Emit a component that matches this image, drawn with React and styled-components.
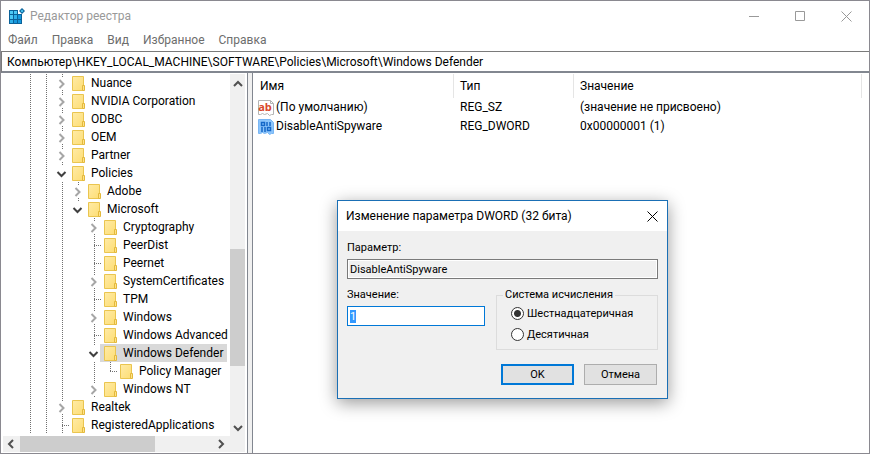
import React, { useEffect, useRef, useState } from "react";
import styled, { createGlobalStyle, css } from "styled-components";

const GlobalStyle = createGlobalStyle`
    * {
        box-sizing: border-box;
    }
    body {
        margin: 0;
        background: #fff;
    }
    body, button, input {
        font-family: Roboto, "Open Sans", sans-serif;
        font-size: 12px;
        color: #000;
    }
    svg {
        flex-shrink: 0;
    }
`;

const Window = styled.div`
    position: relative;
    display: flex;
    flex-direction: column;
    height: 100vh;
    border: 1px solid #8a8990;
    background: #fff;
    overflow: hidden;
`;

const TitleBar = styled.header`
    display: flex;
    align-items: center;
    height: 30px;
    padding-left: 8px;
    gap: 5px;
`;

const WindowTitle = styled.h1`
    flex: 1;
    margin: 0;
    font-size: 12px;
    font-weight: 400;
    color: #999;
`;

const CaptionButtons = styled.div`
    display: flex;
`;

const CaptionButton = styled.button`
    display: flex;
    align-items: center;
    justify-content: center;
    width: 46px;
    height: 28px;
    padding: 0;
    border: 0;
    background: transparent;
`;

const MenuBar = styled.nav`
    display: flex;
    height: 18px;
    padding-left: 7px;
    gap: 14px;
`;

const MenuItem = styled.button`
    padding: 0;
    border: 0;
    background: transparent;
    line-height: 18px;
    color: #6d6d6d;
`;

const AddressBar = styled.div`
    display: flex;
    margin-top: 2px;
    border: 1px solid #7a7a7a;
    border-bottom: 2px solid #828790;
    border-right: 0;
`;

const AddressInput = styled.input`
    flex: 1;
    min-width: 0;
    height: 19px;
    padding: 0 5px;
    border: 0;
    outline: none;
`;

const Panes = styled.main`
    display: flex;
    flex: 1;
    min-height: 0;
    gap: 4px;
    background: #f0f0f0;
`;

const TreePane = styled.section`
    display: flex;
    flex-direction: column;
    width: 247px;
    flex-shrink: 0;
    padding: 1px 2px 1px 2px;
    border-right: 1px solid #828790;
    background: #fff;
`;

const TreeBody = styled.div`
    display: flex;
    flex: 1;
    min-height: 0;
`;

const Tree = styled.ul`
    flex: 1;
    min-width: 0;
    margin: 0;
    padding: 0 0 0 19px;
    list-style: none;
    overflow: hidden;
`;

const TreeRow = styled.li`
    display: flex;
    height: 18px;
    white-space: nowrap;
`;

const TreeLabel = styled.span`
    display: flex;
    align-items: center;
    gap: 6px;
    padding: 0 4px 0 2px;
    line-height: 18px;
    ${(props) =>
        props.$selected &&
        css`
            margin-left: -2px;
            padding-left: 4px;
            background: #d9d9d9;
        `}
`;

const ScrollBar = styled.div`
    display: flex;
    flex-direction: ${(props) => (props.$vertical ? "column" : "row")};
    flex-shrink: 0;
    width: ${(props) => (props.$vertical ? "15px" : "auto")};
    height: ${(props) => (props.$vertical ? "auto" : "16px")};
    padding-right: ${(props) => (props.$vertical ? "0" : "15px")};
    background: #f0f0f0;
`;

const ScrollArrow = styled.button`
    display: flex;
    align-items: center;
    justify-content: center;
    flex: 0 0 17px;
    padding: 0;
    border: 0;
    background: transparent;
`;

const ScrollSpace = styled.div`
    flex: ${(props) => props.$grow} 1 0;
    background: ${(props) => (props.$thumb ? "#cdcdcd" : "transparent")};
`;

const ListPane = styled.section`
    flex: 1;
    min-width: 0;
    padding-top: 1px;
    border-left: 1px solid #828790;
    background: #fff;
`;

const ValueTable = styled.table`
    width: 100%;
    table-layout: fixed;
    border-collapse: separate;
    border-spacing: 0;
`;

const HeadCell = styled.th`
    width: ${(props) => props.$width || "auto"};
    height: 24px;
    padding: 0 6px;
    border-right: ${(props) => (props.$last ? "0" : "1px solid #e5e5e5")};
    text-align: left;
    font-weight: 400;
    &:first-child {
        padding-left: 7px;
    }
`;

const ValueRow = styled.tr`
    height: 19px;
`;

const Cell = styled.td`
    padding: 0 6px;
    line-height: 19px;
    white-space: nowrap;
    &:first-child {
        padding-left: 5px;
    }
`;

const NameCell = styled.div`
    display: flex;
    align-items: center;
    gap: 2px;
`;

const Dialog = styled.form`
    position: absolute;
    left: 336px;
    top: 199px;
    width: 331px;
    border: 1px solid #1a6fb5;
    background: #f0f0f0;
    box-shadow: 0 4px 16px rgba(0, 0, 0, 0.4);
`;

const DialogTitleBar = styled.div`
    display: flex;
    align-items: center;
    justify-content: space-between;
    height: 30px;
    padding-left: 8px;
    background: #fff;
`;

const DialogTitle = styled.h2`
    margin: 0;
    font-size: 12px;
    font-weight: 400;
`;

const DialogClose = styled(CaptionButton)`
    width: 30px;
`;

const DialogBody = styled.div`
    display: grid;
    grid-template-columns: 138px 1fr;
    column-gap: 11px;
    padding: 9px 9px 13px;
    font-size: 11px;
`;

const NameField = styled.div`
    grid-column: 1 / -1;
    display: flex;
    flex-direction: column;
    margin-bottom: 8px;
`;

const DataField = styled.div`
    display: flex;
    flex-direction: column;
`;

const FieldLabel = styled.label`
    height: 19px;
    line-height: 16px;
`;

const TextInput = styled.input`
    width: 100%;
    height: 20px;
    padding: 0 2px;
    border: 1px solid ${(props) => (props.readOnly ? "#7a7a7a" : "#0078d7")};
    background: ${(props) => (props.readOnly ? "#f0f0f0" : "#fff")};
    box-shadow: ${(props) => (props.readOnly ? "inset 0 0 0 1px #fff" : "none")};
    font-size: 11px;
    outline: none;
    &::selection {
        background: #3399ff;
        color: #fff;
    }
`;

const BaseGroup = styled.fieldset`
    display: flex;
    flex-direction: column;
    min-width: 0;
    margin: 0;
    padding: 0 14px 4px;
    border: 1px solid #dcdcdc;
`;

const GroupLegend = styled.legend`
    margin-left: -8px;
    padding: 0 2px;
    line-height: 16px;
`;

const RadioLabel = styled.label`
    display: flex;
    align-items: center;
    gap: 3px;
    height: 21px;
`;

const Radio = styled.input`
    appearance: none;
    width: 13px;
    height: 13px;
    margin: 0;
    border: 1px solid #333;
    border-radius: 50%;
    background: #fff;
    &:checked {
        background: radial-gradient(circle, #333 3px, #fff 4px);
    }
`;

const Buttons = styled.div`
    grid-column: 1 / -1;
    display: flex;
    justify-content: flex-end;
    gap: 10px;
    margin-top: 14px;
    padding-right: 1px;
`;

const DialogButton = styled.button`
    width: 73px;
    height: 21px;
    padding: 0;
    border: ${(props) => (props.$primary ? "2px solid #0078d7" : "1px solid #adadad")};
    background: #e1e1e1;
    font-size: 11px;
`;

const RegeditIcon = () => (
    <svg width="16" height="16" viewBox="0 0 16 16" aria-hidden="true">
        <path d="M0 2h9v4h4v10H0z" fill="#0b6299" />
        <path d="M1 3h3v3H1zM5 3h3v3H5zM1 7h3v4H1z" fill="#4cc8f4" />
        <path d="M5 7h3v4H5zM1 12h3v3H1z" fill="#2fb1ea" />
        <path d="M9 7h3v4H9zM5 12h3v3H5zM9 12h3v3H9z" fill="#1597dc" />
        <path d="M13 0l3 3-3 3-3-3z" fill="#0b6299" />
        <path d="M13 1.5l1.5 1.5L13 4.5 11.5 3z" fill="#4cc8f4" />
    </svg>
);

const FolderIcon = () => (
    <svg width="13" height="15" viewBox="0 0 13 15" aria-hidden="true">
        <defs>
            <linearGradient id="folder" x1="0" y1="0" x2="1" y2="1">
                <stop offset="0" stopColor="#ffeba6" />
                <stop offset="1" stopColor="#fddd74" />
            </linearGradient>
        </defs>
        <path d="M.5.5h11v14H.5z" fill="url(#folder)" stroke="#eac54f" />
        <path d="M10.5 9.5h2v5h-2z" fill="#ffe28a" stroke="#e3b93c" />
    </svg>
);

const StringIcon = () => (
    <svg width="16" height="16" viewBox="0 0 16 16" aria-hidden="true">
        <path d="M.5.5h12l3 3v11h-2l-2 1-2-2-3 1-2-1-2 1h-2z" fill="#fff" stroke="#b4b4b4" />
        <path d="M12.5.5v3h3" fill="none" stroke="#b4b4b4" />
        <text x="7" y="11" textAnchor="middle" fontFamily="Open Sans" fontSize="11" fontWeight="700" fill="#d9472b">
            ab
        </text>
    </svg>
);

const BinaryIcon = () => (
    <svg width="16" height="16" viewBox="0 0 16 16" aria-hidden="true">
        <path d="M.5.5h12l3 3v11h-2l-2 1-2-2-3 1-2-1-2 1h-2z" fill="#8cc5fb" stroke="#78b6f5" />
        <path
            d="M3.5 3.5h3v3h-3zM9 3v4M12 3v4M4 8v5M7 8v5M9.5 8.500h3v3h-3z"
            fill="none"
            stroke="#1467c8"
            strokeWidth="1.5"
        />
    </svg>
);

const CloseIcon = ({ color }) => (
    <svg width="11" height="11" viewBox="0 0 11 11" aria-hidden="true">
        <path d="M.5.5l10 10M10.5.5l-10 10" stroke={color} />
    </svg>
);

const arrows = {
    up: "M1 8l4-4 4 4",
    down: "M1 3l4 4 4-4",
    left: "M6 1L2 5l4 4",
    right: "M2 1l4 4-4 4",
};

const Arrow = ({ direction }) => (
    <svg width="10" height="10" viewBox="0 0 10 10" aria-hidden="true">
        <path d={arrows[direction]} fill="none" stroke="#505050" strokeWidth="2" />
    </svg>
);

// one 16px column of the tree: guide line, branch or expander
const guides = {
    line: "M8.5 0v18",
    tee: "M8.5 0v18M8 9.5h7",
    end: "M8.5 0v10M8 9.5h7",
    closed: "M8.5 0v4M8.5 16v2",
    open: "M8.5 0v2",
};

const Guide = ({ type }) => (
    <svg width="16" height="18" viewBox="0 0 16 18" aria-hidden="true">
        {guides[type] && <path d={guides[type]} stroke="#707070" strokeDasharray="1 1" />}
        {type === "closed" && <path d="M5.5 6l4 4-4 4" fill="none" stroke="#a6a6a6" strokeWidth="2" />}
        {type === "open" && <path d="M3.5 8l4 4 4-4" fill="none" stroke="#404040" strokeWidth="2" />}
    </svg>
);

const base = ["line", "line"];
const sub = [...base, "line", "blank"];

const keys = [
    { name: "Nuance", cols: [...base, "closed"] },
    { name: "NVIDIA Corporation", cols: [...base, "closed"] },
    { name: "ODBC", cols: [...base, "closed"] },
    { name: "OEM", cols: [...base, "closed"] },
    { name: "Partner", cols: [...base, "closed"] },
    { name: "Policies", cols: [...base, "open"] },
    { name: "Adobe", cols: [...base, "line", "closed"] },
    { name: "Microsoft", cols: [...base, "line", "open"] },
    { name: "Cryptography", cols: [...sub, "closed"] },
    { name: "PeerDist", cols: [...sub, "tee"] },
    { name: "Peernet", cols: [...sub, "tee"] },
    { name: "SystemCertificates", cols: [...sub, "closed"] },
    { name: "TPM", cols: [...sub, "tee"] },
    { name: "Windows", cols: [...sub, "closed"] },
    { name: "Windows Advanced", cols: [...sub, "tee"] },
    { name: "Windows Defender", cols: [...sub, "open"] },
    { name: "Policy Manager", cols: [...sub, "line", "end"] },
    { name: "Windows NT", cols: [...sub, "closed"] },
    { name: "Realtek", cols: [...base, "closed"] },
    { name: "RegisteredApplications", cols: [...base, "tee"] },
];

const values = [
    { name: "(По умолчанию)", type: "REG_SZ", data: "(значение не присвоено)", icon: <StringIcon /> },
    { name: "DisableAntiSpyware", type: "REG_DWORD", data: "0x00000001 (1)", icon: <BinaryIcon /> },
];

const menu = ["Файл", "Правка", "Вид", "Избранное", "Справка"];

const EditDialog = () => {
    const inputRef = useRef(null);
    const [data, setData] = useState("1");
    const [radix, setRadix] = useState("hex");

    useEffect(() => {
        inputRef.current.focus();
        inputRef.current.select();
    }, []);

    return (
        <Dialog role="dialog" aria-labelledby="dialog-title" onSubmit={(e) => e.preventDefault()}>
            <DialogTitleBar>
                <DialogTitle id="dialog-title">Изменение параметра DWORD (32 бита)</DialogTitle>
                <DialogClose type="button" aria-label="Закрыть">
                    <CloseIcon color="#000" />
                </DialogClose>
            </DialogTitleBar>
            <DialogBody>
                <NameField>
                    <FieldLabel htmlFor="value-name">Параметр:</FieldLabel>
                    <TextInput id="value-name" readOnly value="DisableAntiSpyware" />
                </NameField>
                <DataField>
                    <FieldLabel htmlFor="value-data">Значение:</FieldLabel>
                    <TextInput
                        id="value-data"
                        ref={inputRef}
                        value={data}
                        onChange={(e) => setData(e.target.value)}
                    />
                </DataField>
                <BaseGroup>
                    <GroupLegend>Система исчисления</GroupLegend>
                    <RadioLabel>
                        <Radio
                            type="radio"
                            name="radix"
                            checked={radix === "hex"}
                            onChange={() => setRadix("hex")}
                        />
                        Шестнадцатеричная
                    </RadioLabel>
                    <RadioLabel>
                        <Radio
                            type="radio"
                            name="radix"
                            checked={radix === "dec"}
                            onChange={() => setRadix("dec")}
                        />
                        Десятичная
                    </RadioLabel>
                </BaseGroup>
                <Buttons>
                    <DialogButton $primary type="submit">OK</DialogButton>
                    <DialogButton type="button">Отмена</DialogButton>
                </Buttons>
            </DialogBody>
        </Dialog>
    );
};

const App = () => {
    const [path, setPath] = useState(
        "Компьютер\\HKEY_LOCAL_MACHINE\\SOFTWARE\\Policies\\Microsoft\\Windows Defender"
    );
    const [selected, setSelected] = useState("Windows Defender");

    return (
        <Window>
            <GlobalStyle />
            <TitleBar>
                <RegeditIcon />
                <WindowTitle>Редактор реестра</WindowTitle>
                <CaptionButtons>
                    <CaptionButton aria-label="Свернуть">
                        <svg width="10" height="11" viewBox="0 0 10 11">
                            <path d="M0 5.5h10" stroke="#999" />
                        </svg>
                    </CaptionButton>
                    <CaptionButton aria-label="Развернуть">
                        <svg width="10" height="10" viewBox="0 0 10 10">
                            <path d="M.5.5h9v9h-9z" fill="none" stroke="#999" />
                        </svg>
                    </CaptionButton>
                    <CaptionButton aria-label="Закрыть">
                        <CloseIcon color="#999" />
                    </CaptionButton>
                </CaptionButtons>
            </TitleBar>
            <MenuBar>
                {menu.map((item) => (
                    <MenuItem key={item}>{item}</MenuItem>
                ))}
            </MenuBar>
            <AddressBar>
                <AddressInput aria-label="Адрес" value={path} onChange={(e) => setPath(e.target.value)} />
            </AddressBar>
            <Panes>
                <TreePane>
                    <TreeBody>
                        <Tree role="tree">
                            {keys.map((key) => (
                                <TreeRow key={key.name} role="treeitem" onClick={() => setSelected(key.name)}>
                                    {key.cols.map((type, i) => (
                                        <Guide key={i} type={type} />
                                    ))}
                                    <TreeLabel $selected={key.name === selected}>
                                        <FolderIcon />
                                        {key.name}
                                    </TreeLabel>
                                </TreeRow>
                            ))}
                        </Tree>
                        <ScrollBar $vertical>
                            <ScrollArrow aria-label="Вверх">
                                <Arrow direction="up" />
                            </ScrollArrow>
                            <ScrollSpace $grow={158} />
                            <ScrollSpace $thumb $grow={117} />
                            <ScrollSpace $grow={53} />
                            <ScrollArrow aria-label="Вниз">
                                <Arrow direction="down" />
                            </ScrollArrow>
                        </ScrollBar>
                    </TreeBody>
                    <ScrollBar>
                        <ScrollArrow aria-label="Влево">
                            <Arrow direction="left" />
                        </ScrollArrow>
                        <ScrollSpace $thumb $grow={135} />
                        <ScrollSpace $grow={58} />
                        <ScrollArrow aria-label="Вправо">
                            <Arrow direction="right" />
                        </ScrollArrow>
                    </ScrollBar>
                </TreePane>
                <ListPane>
                    <ValueTable>
                        <thead>
                            <tr>
                                <HeadCell $width="201px">Имя</HeadCell>
                                <HeadCell $width="120px">Тип</HeadCell>
                                <HeadCell $width="288px">Значение</HeadCell>
                                <HeadCell $last />
                            </tr>
                        </thead>
                        <tbody>
                            {values.map((value) => (
                                <ValueRow key={value.name}>
                                    <Cell>
                                        <NameCell>
                                            {value.icon}
                                            {value.name}
                                        </NameCell>
                                    </Cell>
                                    <Cell>{value.type}</Cell>
                                    <Cell colSpan={2}>{value.data}</Cell>
                                </ValueRow>
                            ))}
                        </tbody>
                    </ValueTable>
                </ListPane>
            </Panes>
            <EditDialog />
        </Window>
    );
};

export default App;
